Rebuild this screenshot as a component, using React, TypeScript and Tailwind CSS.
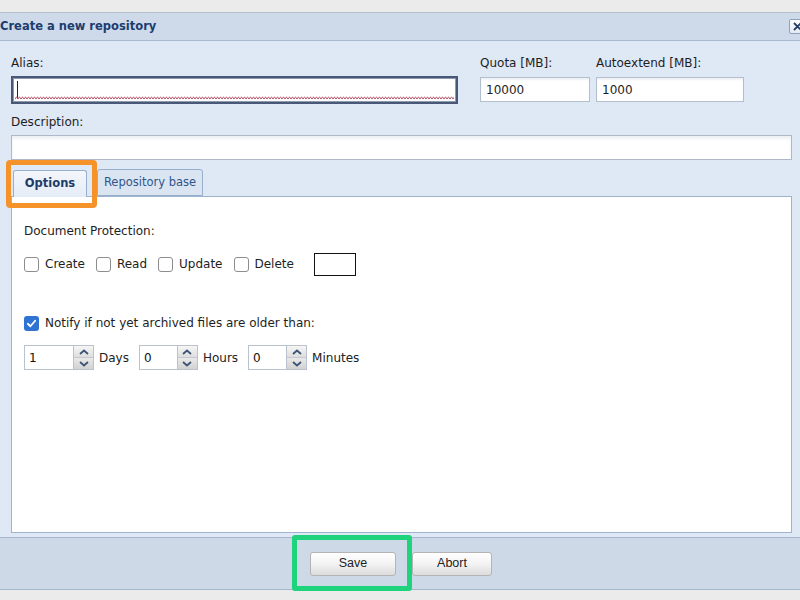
import React from "react";

const Checkbox: React.FC<{ checked?: boolean }> = ({ checked }) =>
  checked ? (
    <span className="w-[15px] h-[15px] rounded-[3px] bg-[#2f74d2] flex items-center justify-center shrink-0">
      <svg width="11" height="11" viewBox="0 0 12 12">
        <path d="M2 6.3 L4.8 9 L10 3" fill="none" stroke="#fff" strokeWidth="2" strokeLinecap="round" strokeLinejoin="round" />
      </svg>
    </span>
  ) : (
    <span className="w-[15px] h-[15px] rounded-[3px] border border-[#8d8d8d] bg-white shrink-0" />
  );

const Spinner: React.FC<{ value: string; width: string; label: string }> = ({ value, width, label }) => (
  <div className="flex items-center">
    <div className={`${width} h-[25px] border border-[#b9c3cf] bg-white flex items-center pl-[4px] text-[12px] text-[#111]`}>
      {value}
    </div>
    <div className="w-[20px] h-[25px] flex flex-col border border-l-0 border-[#b9c3cf]">
      <div className="flex-1 flex items-center justify-center bg-gradient-to-b from-[#f6f6f6] to-[#dedede] border-b border-[#c4c9d0]">
        <svg width="10" height="6" viewBox="0 0 10 6">
          <path d="M1 5 L5 1.5 L9 5" fill="none" stroke="#3b5577" strokeWidth="1.8" />
        </svg>
      </div>
      <div className="flex-1 flex items-center justify-center bg-gradient-to-b from-[#e9e9e9] to-[#d2d2d2]">
        <svg width="10" height="6" viewBox="0 0 10 6">
          <path d="M1 1 L5 4.5 L9 1" fill="none" stroke="#3b5577" strokeWidth="1.8" />
        </svg>
      </div>
    </div>
    <span className="ml-[5px] text-[12px] text-[#222]">{label}</span>
  </div>
);

const protections = ["Create", "Read", "Update", "Delete"];

export default function App() {
  return (
    <div className="w-[800px] h-[600px] bg-[#ebebeb] flex flex-col overflow-hidden font-['DejaVu_Sans',sans-serif]">
      <div className="h-[13px] shrink-0 border-b border-[#b7c1cd]" />

      <div className="flex flex-col h-[577px] shrink-0">
        {/* title bar */}
        <div className="h-[28px] shrink-0 bg-[#cedaea] border-b border-[#a8b9d1] flex items-center">
          <span className="ml-0 text-[11.5px] font-bold text-[#1d3c6e]">Create a new repository</span>
          <div className="ml-auto mr-[-6px] mt-[-1px] w-[17px] h-[15px] rounded-[2px] border border-[#8ea2bf] bg-gradient-to-b from-white to-[#e3eaf3] flex items-center justify-center">
            <svg width="9" height="9" viewBox="0 0 9 9">
              <path d="M1 1 L8 8 M8 1 L1 8" stroke="#243d66" strokeWidth="1.8" />
            </svg>
          </div>
        </div>

        {/* body */}
        <div className="flex-1 bg-[#dfe8f5] pl-[11px] pr-[8px] pt-[14px] pb-[4px] flex flex-col text-[12px] text-[#1e1e1e]">
          <div className="flex">
            <div className="flex flex-col">
              <span className="h-[16px] leading-[16px]">Alias:</span>
              <div className="relative mt-[5px] w-[447px] h-[28px] border-2 border-[#4a5877] bg-white shadow-[inset_0_0_0_1px_#8d9ab0]">
                <div className="absolute left-[4px] top-[3px] w-px h-[18px] bg-[#222]" />
                <svg className="absolute left-[2px] bottom-[2px]" width="439" height="4">
                  <defs>
                    <pattern id="squiggle" width="3" height="4" patternUnits="userSpaceOnUse">
                      <path d="M0 3.2 L1.5 0.8 L3 3.2" fill="none" stroke="#b45a70" strokeWidth="1" />
                    </pattern>
                  </defs>
                  <rect width="439" height="4" fill="url(#squiggle)" />
                </svg>
              </div>
            </div>
            <div className="flex flex-col ml-[22px]">
              <span className="h-[16px] leading-[16px]">Quota [MB]:</span>
              <div className="mt-[6px] w-[110px] h-[25px] border border-[#b3bfce] bg-white shadow-[inset_0_2px_2px_#eef1f5] flex items-center pl-[5px]">
                10000
              </div>
            </div>
            <div className="flex flex-col ml-[6px]">
              <span className="h-[16px] leading-[16px]">Autoextend [MB]:</span>
              <div className="mt-[6px] w-[148px] h-[25px] border border-[#b3bfce] bg-white shadow-[inset_0_2px_2px_#eef1f5] flex items-center pl-[5px]">
                1000
              </div>
            </div>
          </div>

          <span className="mt-[10px] h-[16px] leading-[16px]">Description:</span>
          <div className="mt-[5px] h-[25px] border border-[#adb9c9] bg-white shadow-[inset_0_3px_3px_#eef1f5]" />

          {/* tabs */}
          <div className="mt-[10px] h-[27px] flex items-end pl-[2px] gap-[10px] relative z-10">
            <div className="relative h-[27px] w-[74px] rounded-t-[3px] border border-b-0 border-[#97afcf] bg-gradient-to-b from-[#f4f7fb] to-[#e4ecf6] flex items-center justify-center text-[11.5px] font-bold text-[#1f3a68]">
              Options
              <div className="absolute left-[-8px] top-[-11px] w-[91px] h-[48px] border-[5px] border-[#f5922a] rounded-[4px]" />
            </div>
            <div className="h-[27px] w-[106px] mb-px rounded-t-[3px] border border-[#97afcf] bg-[#dbe5f2] flex items-center justify-center text-[11.5px] text-[#30558a]">
              Repository base
            </div>
          </div>

          {/* panel */}
          <div className="flex-1 border border-[#9fb3cf] bg-white pl-[12px] pt-[26px] flex flex-col mt-[-1px]">
            <span className="h-[16px] leading-[16px]">Document Protection:</span>
            <div className="mt-[17px] h-[16px] flex items-center">
              {protections.map((p, i) => (
                <div key={p} className={`flex items-center ${i > 0 ? "ml-[11px]" : ""}`}>
                  <Checkbox />
                  <span className="ml-[6px] leading-[16px]">{p}</span>
                </div>
              ))}
              <div className="ml-[20px] w-[42px] h-[23px] border-[1.5px] border-[#111] bg-white" />
            </div>

            <div className="mt-[43px] h-[16px] flex items-center">
              <Checkbox checked />
              <span className="ml-[6px] leading-[16px]">Notify if not yet archived files are older than:</span>
            </div>

            <div className="mt-[14px] flex items-center gap-[10px]">
              <Spinner value="1" width="w-[50px]" label="Days" />
              <Spinner value="0" width="w-[39px]" label="Hours" />
              <Spinner value="0" width="w-[39px]" label="Minutes" />
            </div>
          </div>
        </div>

        {/* footer */}
        <div className="h-[53px] shrink-0 bg-[#cdd9e6] border-t border-b border-[#a6b7cf] flex items-center justify-center gap-[16px] font-['Liberation_Sans',sans-serif]">
          <div className="relative ml-[2px]">
            <div className="w-[86px] h-[24px] rounded-[3px] border border-[#b4b4b4] bg-gradient-to-b from-white via-[#f3f3f3] to-[#dcdcdc] flex items-center justify-center text-[12.5px] text-[#222]">
              Save
            </div>
            <div className="absolute left-[-18px] top-[-17px] w-[120px] h-[56px] border-[5px] border-[#1fd27c] rounded-[3px]" />
          </div>
          <div className="w-[80px] h-[24px] rounded-[3px] border border-[#b4b4b4] bg-gradient-to-b from-white via-[#f3f3f3] to-[#dcdcdc] flex items-center justify-center text-[12.5px] text-[#222]">
            Abort
          </div>
        </div>
      </div>
    </div>
  );
}
